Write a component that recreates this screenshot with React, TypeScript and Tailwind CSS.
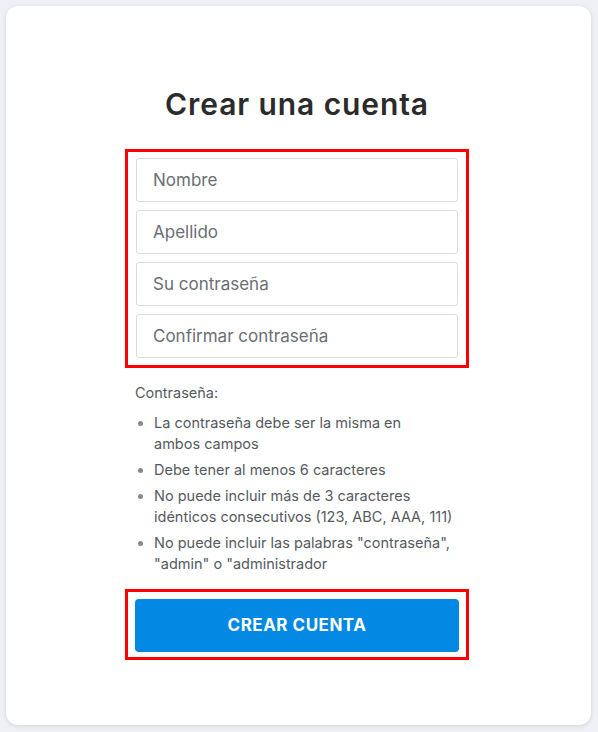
const fields = ["Nombre", "Apellido", "Su contraseña", "Confirmar contraseña"];

const rules = [
  ["La contraseña debe ser la misma en", "ambos campos"],
  ["Debe tener al menos 6 caracteres"],
  ["No puede incluir más de 3 caracteres", "idénticos consecutivos (123, ABC, AAA, 111)"],
  ['No puede incluir las palabras "contraseña",', '"admin" o "administrador'],
];

export default function App() {
  return (
    <div className="min-h-[732px] w-full bg-[#eef0f5] pt-[6px] pl-[6px] font-['Inter',sans-serif]">
      <div className="flex h-[719px] w-[585px] flex-col items-center rounded-xl bg-white pr-[3px] shadow-[0_1px_4px_rgba(0,0,0,0.12)]">
        <h1 className="mt-[80px] text-[30px] font-semibold leading-[36px] tracking-[0.9px] text-[#2b2b2b]">
          Crear una cuenta
        </h1>

        <div className="mt-[27px] w-[344px] border-[3px] border-[#ff0000] px-[8px] pt-[6px] pb-[7px]">
          <div className="flex flex-col gap-[8px]">
            {fields.map((f) => (
              <input
                key={f}
                type={f.includes("contraseña") ? "password" : "text"}
                placeholder={f}
                className="h-[44px] w-full rounded-[3px] border border-[#dcdcdc] px-[16px] text-[17px] text-[#333] outline-none placeholder:text-[#6b6e73]"
              />
            ))}
          </div>
        </div>

        <div className="mt-[14px] w-[324px] text-[14.5px] leading-[21px] text-[#555a60]">
          <p>Contraseña:</p>
          <ul className="mt-[9px] flex list-disc flex-col gap-[5px] pl-[19px] whitespace-nowrap marker:text-[#888]">
            {rules.map((r) => (
              <li key={r[0]}>
                {r.map((line, i) => (
                  <span key={i}>
                    {i > 0 && <br />}
                    {line}
                  </span>
                ))}
              </li>
            ))}
          </ul>
        </div>

        <div className="mt-[15px] w-[344px] border-[3px] border-[#ff0000] px-[7px] pt-[7px] pb-[5px]">
          <button className="h-[53px] w-full rounded-[4px] bg-[#0389e3] text-[17px] font-bold tracking-[0.5px] text-white">
            CREAR CUENTA
          </button>
        </div>
      </div>
    </div>
  );
}
